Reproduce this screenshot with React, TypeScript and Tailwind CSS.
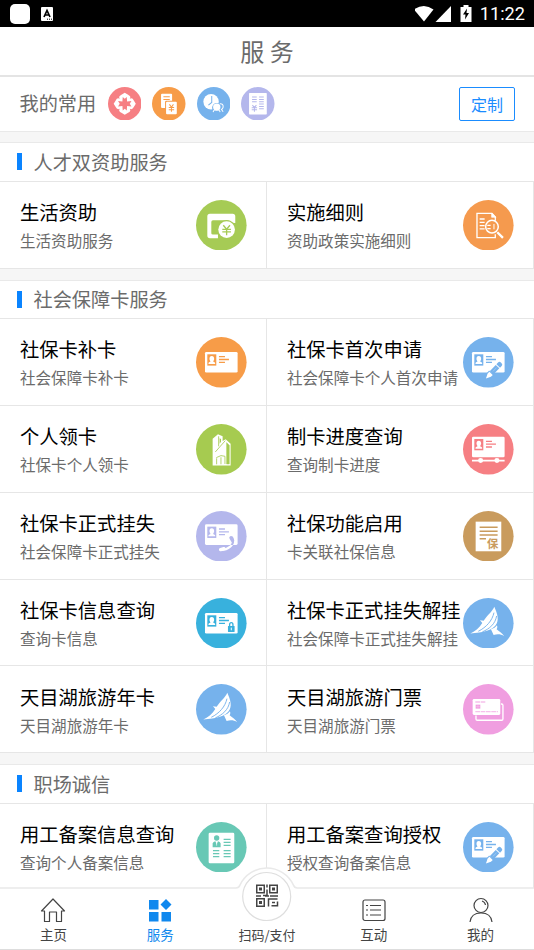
import type { ReactNode } from "react";

type Service = {
  title: string;
  desc: string;
  color: string;
  icon: ReactNode;
};

const blue = "#76b2ec";

function Portrait({ x, y, color }: { x: number; y: number; color: string }) {
  return (
    <g transform={`translate(${x} ${y})`}>
      <rect width="27" height="34" fill={color} />
      <path
        d="M13.500 5c5 0 7 4 7 8 0 4-2 6-3 8 0 2 6 3 6 5v3h-20v-3c0-2 6-3 6-5-1-2-3-4-3-8 0-4 2-8 7-8z"
        fill="#fff"
      />
    </g>
  );
}

function IdCard({ y = 45, color }: { y?: number; color: string }) {
  return (
    <>
      <rect x="27" y={y} width="98" height="62" rx="4" fill="#fff" />
      <Portrait x={34} y={y + 7} color={color} />
      <path
        d={`M69 ${y + 14}h18M69 ${y + 22.5}h30M69 ${y + 31}h18`}
        stroke={color}
        strokeWidth="4"
      />
    </>
  );
}

function PencilCard() {
  return (
    <>
      <IdCard color={blue} />
      <g transform="translate(69 125) rotate(-46)">
        <path d="M8-10H24V10H8z" fill={blue} />
        <path d="M0 0l14-7h8V7h-8z" fill="#fff" />
        <path d="M24-7.500h26v15H24zM53-7.500h7q6 0 6 6v3q0 6-6 6h-7z" fill={blue} />
        <path d="M30 0h16" stroke="#a9cff3" strokeWidth="2" />
      </g>
    </>
  );
}

function Bird() {
  return (
    <>
      <path
        d="M94 26C87 42 74 50 62 68L51 67l7 8C48 90 38 99 22 107C40 105 58 104 74 98C96 90 106 76 104 58C103 46 98 36 94 26z"
        fill="#fff"
      />
      <path
        d="M93 44C88 68 70 88 46 100M101 54C97 78 80 92 58 102"
        fill="none"
        stroke={blue}
        strokeWidth="2.800"
      />
      <path d="M102 82c-4 6-10 10-18 12l8 17c11-3 22-3 32 4-6-9-14-14-23-21 2-3 3-6 1-12z" fill="#fff" />
    </>
  );
}

function MoneyIcon() {
  return (
    <>
      <path
        d="M42 41h68q8 0 8 8v20h-12q-1-8-13-8H51q-5 0-5 5v34q0 4 5 4h15v11H42q-8 0-8-8V49q0-8 8-8z"
        fill="#fff"
      />
      <circle cx="92" cy="89" r="29" fill="#a6cb55" />
      <circle cx="92" cy="89" r="25" fill="#fff" />
      <path d="M82 76l10 12 10-12M92 88v18M79 88h26M79 96h26" fill="none" stroke="#a6cb55" strokeWidth="4" />
    </>
  );
}

function SearchDocIcon() {
  return (
    <g fill="none" stroke="#fff" strokeWidth="4">
      <path d="M97 62V51L87 40H42v73h55v-10" />
      <path d="M86 39v13h13z" fill="#fff" strokeWidth="2" />
      <path d="M50 57h15M50 67h15M50 77h15M50 87h15M73 76h10M73 86h10" />
      <circle cx="87" cy="80" r="19" strokeWidth="4.500" />
      <path d="M93 72v16" strokeWidth="3" />
      <path d="M103 97l17 17" strokeWidth="7" />
    </g>
  );
}

function BuildingIcon() {
  return (
    <>
      <path d="M50 125V44l16-13 14 6v14l9-5 15 13v66z" fill="#fff" />
      <g fill="none" stroke="#a6cb50" strokeWidth="2.500">
        <path d="M68 37v30M58 84l30-34" />
        <path d="M92 56l8 8v56h-8z" fill="#a6cb50" strokeWidth="1.500" />
        <path d="M61 101l14-6 12 2v23M75 100v21M62 103v18" />
      </g>
      <path d="M71 43l4 2v8l-4 6z" fill="#a6cb50" />
    </>
  );
}

function SliderCardIcon() {
  return (
    <>
      <IdCard y={38} color="#f67f83" />
      <path d="M27 110h98" stroke="#fff" strokeWidth="5" />
      <circle cx="53" cy="110" r="7.500" fill="#fff" />
      <circle cx="102" cy="110" r="7.500" fill="#fff" />
    </>
  );
}

function Handset({ color, clip }: { color: string; clip?: string }) {
  return (
    <g fill="none" stroke={color} strokeLinecap="round" clipPath={clip}>
      <path d="M109 80Q116 96 103 107Q90 118 74 117" strokeWidth="6" />
      <path d="M105 80l5 9M74 116l10-3" strokeWidth="10" />
    </g>
  );
}

function PhoneCardIcon() {
  return (
    <>
      <IdCard y={40} color="#b4b7ec" />
      <clipPath id="below-card">
        <rect x="60" y="102" width="65" height="30" />
      </clipPath>
      <Handset color="#b4b7ec" />
      <Handset color="#fff" clip="url(#below-card)" />
    </>
  );
}

function LockCardIcon() {
  return (
    <>
      <IdCard color="#38b1dd" />
      <path d="M101 86v-6q0-6 5-6t5 6v6" fill="none" stroke="#38b1dd" strokeWidth="4" />
      <rect x="96" y="84" width="20" height="18" rx="1" fill="#38b1dd" />
      <path d="M106 89v8" stroke="#fff" strokeWidth="3" />
    </>
  );
}

function InsuranceIcon() {
  return (
    <>
      <rect x="38" y="32" width="77" height="89" fill="#fff" />
      <path d="M50 49h54M50 61h54M50 72h54M50 83h19" stroke="#c99b5d" strokeWidth="4.500" />
      <text x="72" y="110" fontSize="34" fontWeight="700" fill="#c99b5d">
        保
      </text>
    </>
  );
}

function BankCardsIcon() {
  return (
    <>
      <rect x="39" y="60" width="81" height="49" rx="4" fill="none" stroke="#fff" strokeWidth="4" />
      <rect x="27" y="43" width="87" height="52" rx="5" fill="#f09ee0" />
      <rect x="29" y="45" width="83" height="48" rx="4" fill="#fff" />
      <path d="M37 54h31M37 83h68" stroke="#f6c0ec" strokeWidth="4" strokeDasharray="14 2" />
      <rect x="38" y="62" width="14" height="12" fill="#f09ee0" />
      <path d="M38 68h14M45 62v12" stroke="#fbe0f6" />
    </>
  );
}

function ResumeIcon() {
  return (
    <>
      <rect x="38" y="32" width="77" height="92" rx="4" fill="#fff" />
      <circle cx="62" cy="48" r="8" fill="#68c8b5" />
      <path d="M50 76V64q2-5 8-6l4 9 4-9q6 1 8 6v12z" fill="#68c8b5" />
      <path d="M62 59v12" stroke="#fff" strokeWidth="2" />
      <path
        d="M83 52h21M83 61h21M83 70h21M51 86h19M83 86h21M51 95h19M83 95h21M51 104h19M83 104h21"
        stroke="#68c8b5"
        strokeWidth="3.500"
      />
    </>
  );
}

const talent: Service[] = [
  { title: "生活资助", desc: "生活资助服务", color: "#a6cb55", icon: <MoneyIcon /> },
  { title: "实施细则", desc: "资助政策实施细则", color: "#f59a4e", icon: <SearchDocIcon /> },
];

const socialCard: Service[] = [
  { title: "社保卡补卡", desc: "社会保障卡补卡", color: "#f79c48", icon: <IdCard color="#f79c48" /> },
  { title: "社保卡首次申请", desc: "社会保障卡个人首次申请", color: blue, icon: <PencilCard /> },
  { title: "个人领卡", desc: "社保卡个人领卡", color: "#a6cb50", icon: <BuildingIcon /> },
  { title: "制卡进度查询", desc: "查询制卡进度", color: "#f67f83", icon: <SliderCardIcon /> },
  { title: "社保卡正式挂失", desc: "社会保障卡正式挂失", color: "#b4b7ec", icon: <PhoneCardIcon /> },
  { title: "社保功能启用", desc: "卡关联社保信息", color: "#c99b5d", icon: <InsuranceIcon /> },
  { title: "社保卡信息查询", desc: "查询卡信息", color: "#38b1dd", icon: <LockCardIcon /> },
  { title: "社保卡正式挂失解挂", desc: "社会保障卡正式挂失解挂", color: blue, icon: <Bird /> },
  { title: "天目湖旅游年卡", desc: "天目湖旅游年卡", color: blue, icon: <Bird /> },
  { title: "天目湖旅游门票", desc: "天目湖旅游门票", color: "#f09ee0", icon: <BankCardsIcon /> },
];

const workplace: Service[] = [
  { title: "用工备案信息查询", desc: "查询个人备案信息", color: "#68c8b5", icon: <ResumeIcon /> },
  { title: "用工备案查询授权", desc: "授权查询备案信息", color: blue, icon: <PencilCard /> },
];

function ServiceCell({ item }: { item: Service }) {
  return (
    <div className="flex h-[86.800px] items-center justify-between border-r border-b border-[#e6e6e6] pt-px pr-[19px] pl-5">
      <div className="w-0 pt-[0.800px] whitespace-nowrap">
        <h3 className="text-[19.300px] leading-[30px] text-black">{item.title}</h3>
        <p className="text-[15.550px] leading-[27px] text-[#6b6b6b]">{item.desc}</p>
      </div>
      <svg viewBox="0 0 152 152" className="size-[50.600px] shrink-0">
        <circle cx="76" cy="76" r="76" fill={item.color} />
        {item.icon}
      </svg>
    </div>
  );
}

function Section({ title, items }: { title: string; items: Service[] }) {
  return (
    <section className="mb-[11px] border-t border-[#e9e9e9] bg-white">
      <div className="flex h-[38.600px] items-center border-b border-[#e6e6e6] pl-[17px]">
        <span className="h-[17px] w-[5px] bg-[#0a84ff]" />
        <h2 className="ml-[11.500px] text-[19.200px] leading-[38px] text-[#6b6b6b]">{title}</h2>
      </div>
      <div className="grid grid-cols-2">
        {items.map((item) => (
          <ServiceCell key={item.title} item={item} />
        ))}
      </div>
    </section>
  );
}

function StatusBar() {
  return (
    <div className="flex h-[27px] shrink-0 items-center justify-between bg-black pr-[9px] pl-[10px]">
      <div className="flex items-center gap-[11px]">
        <span className="size-[20px] rounded-[5px] bg-white" />
        <svg width="12" height="14" viewBox="0 0 12 14">
          <rect width="12" height="14" rx="1" fill="#fff" />
          <path d="M3 10l3-6.500L9 10M4.300 8h3.400" fill="none" stroke="#000" strokeWidth="1.700" />
          <path d="M6 12.200h5" stroke="#000" strokeDasharray="1 1" />
        </svg>
      </div>
      <div className="flex items-center">
        <svg width="58" height="18" viewBox="0 0 58 18" fill="#fff">
          <path d="M-1 4.500Q9-2.500 18.500 4.500L9 16.500z" />
          <path d="M36 1v16H20.500z" />
          <path d="M45.500 2h3V0h5v2h3v15h-11z" />
          <path d="M52 3.500l-4 6h2.500l-.5 5 4-6.500h-2.500z" fill="#000" />
        </svg>
        <span className="ml-[7px] font-[Roboto] text-[18.200px] leading-[27px] text-white">11:22</span>
      </div>
    </div>
  );
}

function FavoriteIcon({ color, children }: { color: string; children: ReactNode }) {
  return (
    <svg viewBox="0 0 100 100" className="size-[33.500px]">
      <circle cx="50" cy="50" r="50" fill={color} />
      {children}
    </svg>
  );
}

function Favorites() {
  return (
    <div className="mb-[10.700px] flex h-[55px] shrink-0 items-center border-b border-[#e9e9e9] bg-white pr-[19px] pl-[19.500px]">
      <span className="text-[19.200px] text-[#6b6b6b]">我的常用</span>
      <div className="ml-[11.500px] flex gap-[11px]">
        <FavoriteIcon color="#f67f83">
          <path
            d="M50 17L60 23Q70 28 65 35Q73 31 77 40L83 50L77 60Q73 69 65 65Q70 72 60 77L50 83L40 77Q30 72 35 65Q27 69 23 60L17 50L23 40Q27 31 35 35Q30 28 40 23z"
            fill="#fff"
          />
          <path
            d="M50 35l6-5 1 13 13-1-5 8 5 8-13-1-1 13-6-5-6 5-1-13-13 1 5-8-5-8 13 1 1-13z"
            fill="#f67f83"
          />
        </FavoriteIcon>
        <FavoriteIcon color="#f79c48">
          <rect x="27" y="20" width="33" height="43" rx="3" fill="#fff" />
          <path d="M34 29h19M34 37h19" stroke="#f79c48" strokeWidth="3" />
          <rect x="39" y="41" width="37" height="41" rx="4" fill="#f79c48" />
          <rect x="42" y="44" width="32" height="37" rx="3" fill="#fff" />
          <path d="M52 52l6 8 6-8M58 60v14M50 61h16M50 68h16" fill="none" stroke="#f79c48" strokeWidth="3" />
        </FavoriteIcon>
        <FavoriteIcon color={blue}>
          <circle cx="42" cy="44" r="23" fill="#fff" />
          <path d="M44 27v19l-10 8" fill="none" stroke={blue} strokeWidth="3" />
          <circle cx="59" cy="62" r="14" fill={blue} />
          <circle cx="59" cy="60" r="11" fill="#fff" />
          <path d="M48 75q1-6 6-7h9q5 1 6 7M68 50q11-1 10 10-1 5-5 7l5 7" fill="none" stroke="#fff" strokeWidth="3" />
        </FavoriteIcon>
        <FavoriteIcon color="#b4b7ec">
          <rect x="24" y="18" width="53" height="64" rx="2" fill="#fff" />
          <path
            d="M33 30h14M33 37h14M33 44h14M54 30h14M54 37h14M54 44h14M54 51h14M54 58h14M54 65h14"
            stroke="#b4b7ec"
            strokeWidth="3"
          />
          <path d="M34 54l6 7 6-7M40 61v13M32 62h16M32 68h16" fill="none" stroke="#b4b7ec" strokeWidth="3" />
        </FavoriteIcon>
      </div>
      <button className="ml-auto h-[34px] w-[56px] rounded-xs border border-[#1a8cff] text-[16px] leading-[30px] text-[#1a8cff]">
        定制
      </button>
    </div>
  );
}

function NavItem({ label, active, children }: { label: string; active?: boolean; children?: ReactNode }) {
  return (
    <div
      className={
        active
          ? "flex flex-1 flex-col items-center pt-[8.500px] text-[#1088ee]"
          : "flex flex-1 flex-col items-center pt-[8.500px] text-[#444]"
      }
    >
      <svg width="26" height="26" viewBox="0 0 26 26" fill="none" stroke="currentColor" strokeWidth="1.200">
        {children}
      </svg>
      <span className="mt-[0.500px] text-[13.500px] leading-[22px] whitespace-nowrap">{label}</span>
    </div>
  );
}

function BottomNav() {
  return (
    <nav className="relative flex h-[62px] shrink-0 border-b border-[#ddd] bg-white">
      <svg className="absolute -top-[21px] left-0" width="534" height="56" viewBox="0 0 534 56">
        <path
          d="M0 21H236Q239 21 240 18A29.500 29.500 0 0 1 293.400 18Q294.400 21 297.400 21H534V56H0z"
          fill="#fff"
        />
        <path
          d="M0 21H236Q239 21 240 18A29.500 29.500 0 0 1 293.400 18Q294.400 21 297.400 21H534"
          fill="none"
          stroke="#e9e9e9"
          strokeWidth="1.600"
        />
        <circle cx="266.700" cy="29.500" r="24" fill="#fff" stroke="#dedede" strokeWidth="1.200" />
        <g transform="translate(256 17.500)" fill="none" stroke="#444" strokeWidth="1.500">
          <path d="M.75.75h7.500v7.500H.75zM13.750.75h7.500v7.500h-7.500zM.75 14.250h7.500v7.500H.75z" />
          <path d="M3 3h3v3H3zM16 3h3v3h-3zM3 16.500h3v3H3z" fill="#444" stroke="none" />
          <path d="M11 0v3M11 5v6H7M0 11.500h5M9 11.500h4M14 11.500h8M12.500 22v-7.500h9M16 18h3M15.500 21.250h6V17" />
        </g>
      </svg>
      <div className="relative flex flex-1">
        <NavItem label="主页">
          <path d="M1.500 14L13 2l11.500 12h-3v10.500h-5V15h-7v9.500h-5V14z" strokeLinejoin="round" />
        </NavItem>
        <NavItem label="服务" active>
          <path
            d="M2 3h9.500v9.500H2zM2 15h9.500v9.500H2zM14.500 15H24v9.500h-9.500zM19 2l5.500 5.500L19 13l-5.500-5.500z"
            fill="currentColor"
            stroke="none"
          />
        </NavItem>
        <div className="flex flex-1 justify-center pt-[36px] text-[13px] leading-[22px] whitespace-nowrap text-[#444]">
          扫码/支付
        </div>
        <NavItem label="互动">
          <rect x="2" y="3" width="22" height="20.500" rx="2" />
          <path d="M9 8.500h11M9 13h11M9 18h11M5 8.500h2M5 13h2M5 18h2" />
        </NavItem>
        <NavItem label="我的">
          <circle cx="13" cy="8.500" r="7" />
          <path d="M2 25q1-9 11-9t11 9M14 4q3 1 3.500 4" />
        </NavItem>
      </div>
    </nav>
  );
}

export default function App() {
  return (
    <div className="flex h-[950px] w-[534px] flex-col overflow-hidden bg-white font-['Noto_Sans_CJK_SC',sans-serif]">
      <StatusBar />
      <header className="flex h-[49.500px] shrink-0 items-center justify-center border-b-2 border-[#e4e4e4] bg-white">
        <h1 className="text-[24px] leading-[48px] text-[#6b6b6b]">服 务</h1>
      </header>
      <main className="min-h-0 flex-1 overflow-hidden bg-[#f6f6f6]">
        <Favorites />
        <Section title="人才双资助服务" items={talent} />
        <Section title="社会保障卡服务" items={socialCard} />
        <Section title="职场诚信" items={workplace} />
      </main>
      <BottomNav />
    </div>
  );
}
